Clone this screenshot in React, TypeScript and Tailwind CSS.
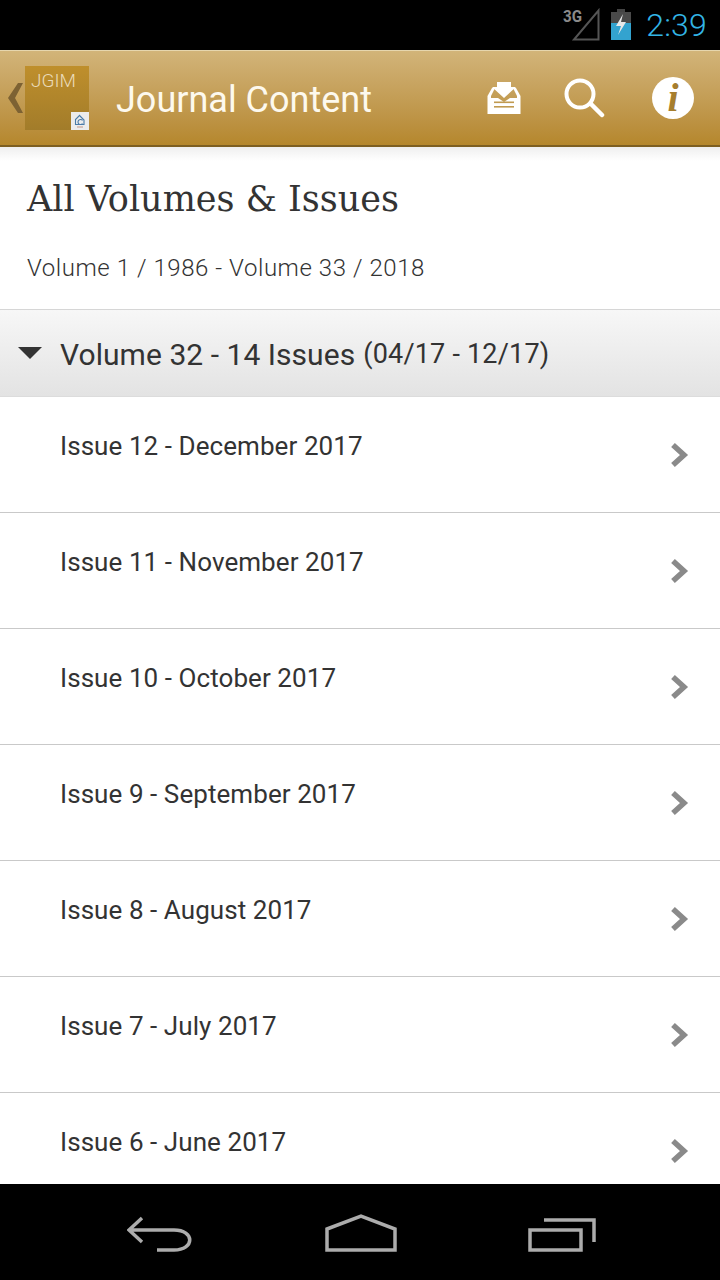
import React from 'react';

const issues = [
  'Issue 12 - December 2017',
  'Issue 11 - November 2017',
  'Issue 10 - October 2017',
  'Issue 9 - September 2017',
  'Issue 8 - August 2017',
  'Issue 7 - July 2017',
  'Issue 6 - June 2017',
];

const roboto = 'font-[Roboto,sans-serif]';

const StatusBar = () => (
  <div className="h-[50px] bg-black flex items-start justify-end pr-[13px] shrink-0">
    <svg width="38" height="34" viewBox="0 0 38 34" className="mt-[8px] mr-[11px]">
      <path d="M36.5 2.5V31.5H12Z" fill="none" stroke="#555" strokeWidth="2" />
      <text x="1" y="14" fontFamily="Roboto, sans-serif" fontWeight="700" fontSize="16" fill="#8a8a8a" textLength="19" lengthAdjust="spacingAndGlyphs">3G</text>
    </svg>
    <svg width="20" height="32" viewBox="0 0 20 32" className="mt-[9px] mr-[15px]">
      <rect x="6" y="0" width="8" height="3" fill="#444" />
      <rect x="0" y="3" width="20" height="11" fill="#4a4a4a" />
      <rect x="0" y="14" width="20" height="17" fill="#33a3cf" />
      <path d="M12 5L5 17H10L7 26L15 13H10Z" fill="#e8e8e8" />
    </svg>
    <span className={`${roboto} text-[32px] leading-[50px] font-light text-[#33b5e5] tracking-[0.2px]`}>2:39</span>
  </div>
);

const Header = () => (
  <div className="h-[97px] shrink-0 flex items-center border-t border-[#e6d6ae] border-b-2 border-b-[#7d5f22] bg-gradient-to-b from-[#d2b479] to-[#b5872c]">
    <svg width="16" height="30" viewBox="0 0 16 30" className="ml-[8px] shrink-0">
      <path d="M10 0H15L7 15L15 30H10L0 15Z" fill="#7d6233" />
    </svg>
    <div className="relative ml-[1px] w-[64px] h-[64px] shrink-0 bg-gradient-to-b from-[#bf8f2c] to-[#a27c2a]">
      <span className={`${roboto} block pl-[6px] pt-[3px] text-[19px] leading-[24px] font-light text-[#eadbb9]`}>JGIM</span>
      <div className="absolute right-0 bottom-0 w-[18px] h-[18px] bg-[#ececec] flex items-center justify-center">
        <svg width="14" height="15" viewBox="0 0 14 15">
          <path d="M7 1L2.5 5.5V10.5H11V6L7 2M9.5 6.5A2.5 2.5 0 1 0 9.5 9.5" fill="none" stroke="#4a7ba8" strokeWidth="1.1" />
          <path d="M4 13H10" stroke="#c9a79a" strokeWidth="1.2" />
        </svg>
      </div>
    </div>
    <span className={`${roboto} ml-[27px] pt-[4px] text-[36px] leading-none text-[#fdf9ee] flex-1`}>Journal Content</span>
    <svg width="34" height="34" viewBox="0 0 34 34" className="mr-[42px] shrink-0">
      <path d="M10 1H24V6H29L17 17L5 6H10Z" fill="#fff" />
      <path d="M5 7H8L4 15V29H30V15L26 7H29L33.5 15V33H0.5V15Z" fill="#fff" />
      <path d="M4 17H11L17 21L23 17H30V29H4Z" fill="#fff" />
      <rect x="7" y="20.5" width="20" height="1.6" fill="#c09a50" />
      <rect x="7" y="25" width="20" height="1.6" fill="#c09a50" />
    </svg>
    <svg width="42" height="42" viewBox="0 0 42 42" className="mr-[47px] shrink-0">
      <circle cx="17" cy="17" r="13.5" fill="none" stroke="#fff" strokeWidth="4" />
      <path d="M28 27L39 38" stroke="#fff" strokeWidth="4.5" strokeLinecap="round" />
    </svg>
    <div className="w-[42px] h-[42px] mr-[26px] rounded-full bg-white shrink-0 flex items-center justify-center">
      <span className="font-['Liberation_Serif',serif] italic font-bold text-[40px] leading-none text-[#a67e2e]">i</span>
    </div>
  </div>
);

const Chevron = () => (
  <svg width="20" height="26" viewBox="0 0 20 26" className="shrink-0">
    <path d="M4 3L15 13L4 23" fill="none" stroke="#8a8a8a" strokeWidth="5.5" />
  </svg>
);

export default function App() {
  return (
    <div className="w-[720px] h-[1280px] flex flex-col bg-white overflow-hidden">
      <StatusBar />
      <Header />
      <div className="flex-1 min-h-0 overflow-hidden">
        <div className="h-[14px] bg-gradient-to-b from-[#efefef] to-white" />
        <h1 className="font-['DejaVu_Serif',serif] pl-[27px] pt-[16px] text-[35px] leading-[44px] text-[#333]">All Volumes &amp; Issues</h1>
        <p className={`${roboto} pl-[27px] mt-[31px] h-[57px] text-[24px] leading-[32px] font-light text-[#333] tracking-[0.55px]`}>
          Volume 1 / 1986 - Volume 33 / 2018
        </p>
        <div className="h-[88px] pt-[2px] border-t border-[#d6d6d6] border-b border-b-[#dcdcdc] bg-gradient-to-b from-[#f7f7f7] to-[#e3e3e3] flex items-center">
          <svg width="24" height="12" viewBox="0 0 24 12" className="ml-[18px] mb-[2px] shrink-0">
            <path d="M0 0H24L12 12Z" fill="#333" />
          </svg>
          <span className={`${roboto} ml-[18px] text-[30px] text-[#333] tracking-[0.05px]`}>Volume 32 - 14 Issues</span>
          <span className={`${roboto} ml-[8px] text-[27px] text-[#333] tracking-[0.2px]`}>(04/17 - 12/17)</span>
        </div>
        {issues.map((label) => (
          <div key={label} className="h-[116px] border-b border-[#c9c9c9] flex justify-between pl-[60px] pr-[31px]">
            <span className={`${roboto} pt-[32px] text-[26px] leading-[34px] text-[#333] tracking-[0.07px]`}>{label}</span>
            <div className="pt-[45px]">
              <Chevron />
            </div>
          </div>
        ))}
      </div>
      <div className="h-[96px] bg-black shrink-0 flex items-start justify-between pl-[127px] pr-[124px] pt-[30px]">
        <svg width="66" height="38" viewBox="0 0 66 38">
          <path d="M15 4L2 16L15 28M2 16H47C68 16 68 36 47 36H30" fill="none" stroke="#acacac" strokeWidth="3.5" />
        </svg>
        <svg width="72" height="38" viewBox="0 0 72 38">
          <path d="M2 15L36 2L70 15V36H2Z" fill="none" stroke="#acacac" strokeWidth="3.5" />
        </svg>
        <svg width="68" height="38" viewBox="0 0 68 38">
          <path d="M16 6H66V28M2 16H53V36H2Z" fill="none" stroke="#acacac" strokeWidth="3.5" />
        </svg>
      </div>
    </div>
  );
}
